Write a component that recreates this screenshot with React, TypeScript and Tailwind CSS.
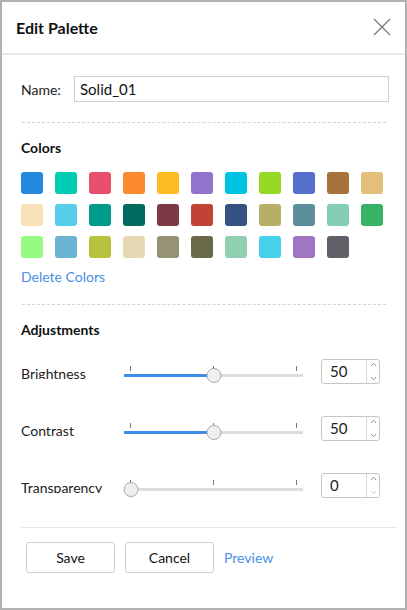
import React from "react";

const swatches = [
  "#2589e0", "#00cbb3", "#e9506f", "#fa8a2c", "#ffbb22", "#9173cc", "#00c3e0", "#95d925", "#566fcf", "#a8733b", "#e3bf7a",
  "#f5e2b8", "#58cde9", "#009a8c", "#006b5e", "#7c3a45", "#c04335", "#345282", "#b8af67", "#5b9098", "#83cdb4", "#38b264",
  "#97fb82", "#6ab3d3", "#b9c23f", "#e6d8b2", "#969375", "#6a6947", "#90cfb1", "#45d0ec", "#9e76c2", "#5f6068",
];

const adjustments = [
  { label: "Brightness", value: 50 },
  { label: "Contrast", value: 50 },
  { label: "Transparency", value: 0 },
];

function Slider({ value }: { value: number }) {
  const pos = (value / 100) * 179;
  return (
    <div className="relative h-[25px] w-[179px]">
      <div className="absolute left-0 right-0 top-[15px] h-[3px] bg-[#dcdcdc]" />
      <div className="absolute left-0 top-[15px] h-[3px] bg-[#3d8ee8]" style={{ width: pos }} />
      <div className="absolute left-[6px] top-[7px] h-[5px] w-px bg-[#777]" />
      <div className="absolute left-[89px] top-[7px] h-[5px] w-px bg-[#777]" />
      <div className="absolute left-[172px] top-[7px] h-[5px] w-px bg-[#777]" />
      <div
        className="absolute top-[9px] h-[15px] w-[15px] -translate-x-1/2 rounded-full border border-[#a9a9a9] bg-[#efefef]"
        style={{ left: pos === 0 ? 7 : pos }}
      />
    </div>
  );
}

function NumberBox({ value, min }: { value: number; min: boolean }) {
  return (
    <div className="flex h-[25px] w-[59px] rounded-[3px] border border-[#c6c6c6] bg-white">
      <div className="flex flex-1 items-center pl-[8px] text-[15px] text-[#222]">{value}</div>
      <div className="flex w-[13px] flex-col items-center justify-between border-l border-[#d8d8d8] py-[2px]">
        <svg width="7" height="5" viewBox="0 0 7 5">
          <path d="M1 4 L3.5 1.2 L6 4" fill="none" stroke="#888" strokeWidth="0.9" />
        </svg>
        <svg width="7" height="5" viewBox="0 0 7 5">
          <path d="M1 1 L3.5 3.8 L6 1" fill="none" stroke={min ? "#c8c8c8" : "#888"} strokeWidth="0.9" />
        </svg>
      </div>
    </div>
  );
}

export default function App() {
  return (
    <div
      className="flex h-[610px] w-[407px] flex-col border-2 border-[#b3b0b0] bg-white text-[#222]"
      style={{ fontFamily: "Lato, 'Open Sans', sans-serif" }}
    >
      <div className="flex h-[53px] items-center justify-between border-b-2 border-[#e9e9e9] pl-[14px] pr-[14px]">
        <h1 className="text-[16px] font-bold text-[#111]">Edit Palette</h1>
        <svg width="18" height="18" viewBox="0 0 18 18" className="mt-[-2px]">
          <path d="M1 1 L17 17 M17 1 L1 17" stroke="#777" strokeWidth="1.2" />
        </svg>
      </div>

      <div className="flex flex-col pl-[19px] pr-[16px]">
        <div className="mt-[21px] flex items-center">
          <span className="w-[53px] text-[14px]">Name:</span>
          <input
            className="h-[26px] flex-1 border border-[#cfcfcf] px-[5px] text-[15px] text-[#111] outline-none"
            defaultValue="Solid_01"
          />
        </div>

        <div className="mr-[3px] ml-[1px] mt-[20px] border-t border-dashed border-[#d4d4d4]" />

        <h2 className="mt-[15px] text-[14px] font-bold leading-[20px] text-[#111]">Colors</h2>
        <div className="mt-[14px] grid grid-cols-[repeat(11,22px)] gap-x-[12px] gap-y-[10px]">
          {swatches.map((c) => (
            <div key={c} className="h-[22px] w-[22px] rounded-[3px]" style={{ background: c }} />
          ))}
        </div>
        <a className="mt-[9px] text-[14px] leading-[20px] text-[#4a8fe7]">Delete Colors</a>

        <div className="mr-[3px] ml-[1px] mt-[17px] border-t border-dashed border-[#d4d4d4]" />

        <h2 className="mt-[15px] text-[14px] font-bold leading-[20px] text-[#111]">Adjustments</h2>
        <div className="mt-[19px] flex flex-col gap-[32px]">
          {adjustments.map((a) => (
            <div key={a.label} className="flex h-[25px] items-start">
              <span className="block h-[20px] w-[103px] overflow-hidden pt-[5px] text-[14px] leading-[20px]">
                {a.label}
              </span>
              <Slider value={a.value} />
              <div className="ml-[18px]">
                <NumberBox value={a.value} min={a.value === 0} />
              </div>
            </div>
          ))}
        </div>
      </div>

      <div className="ml-[19px] mr-[8px] mt-[29px] border-t border-[#e6e6e6]" />
      <div className="mt-[14px] flex items-center gap-[10px] pl-[24px]">
        <button className="h-[31px] w-[89px] rounded-[3px] border border-[#cfcfcf] bg-white text-[14px] text-[#111]">
          Save
        </button>
        <button className="h-[31px] w-[89px] rounded-[3px] border border-[#cfcfcf] bg-white text-[14px] text-[#111]">
          Cancel
        </button>
        <a className="text-[14px] text-[#4a8fe7]">Preview</a>
      </div>
    </div>
  );
}
